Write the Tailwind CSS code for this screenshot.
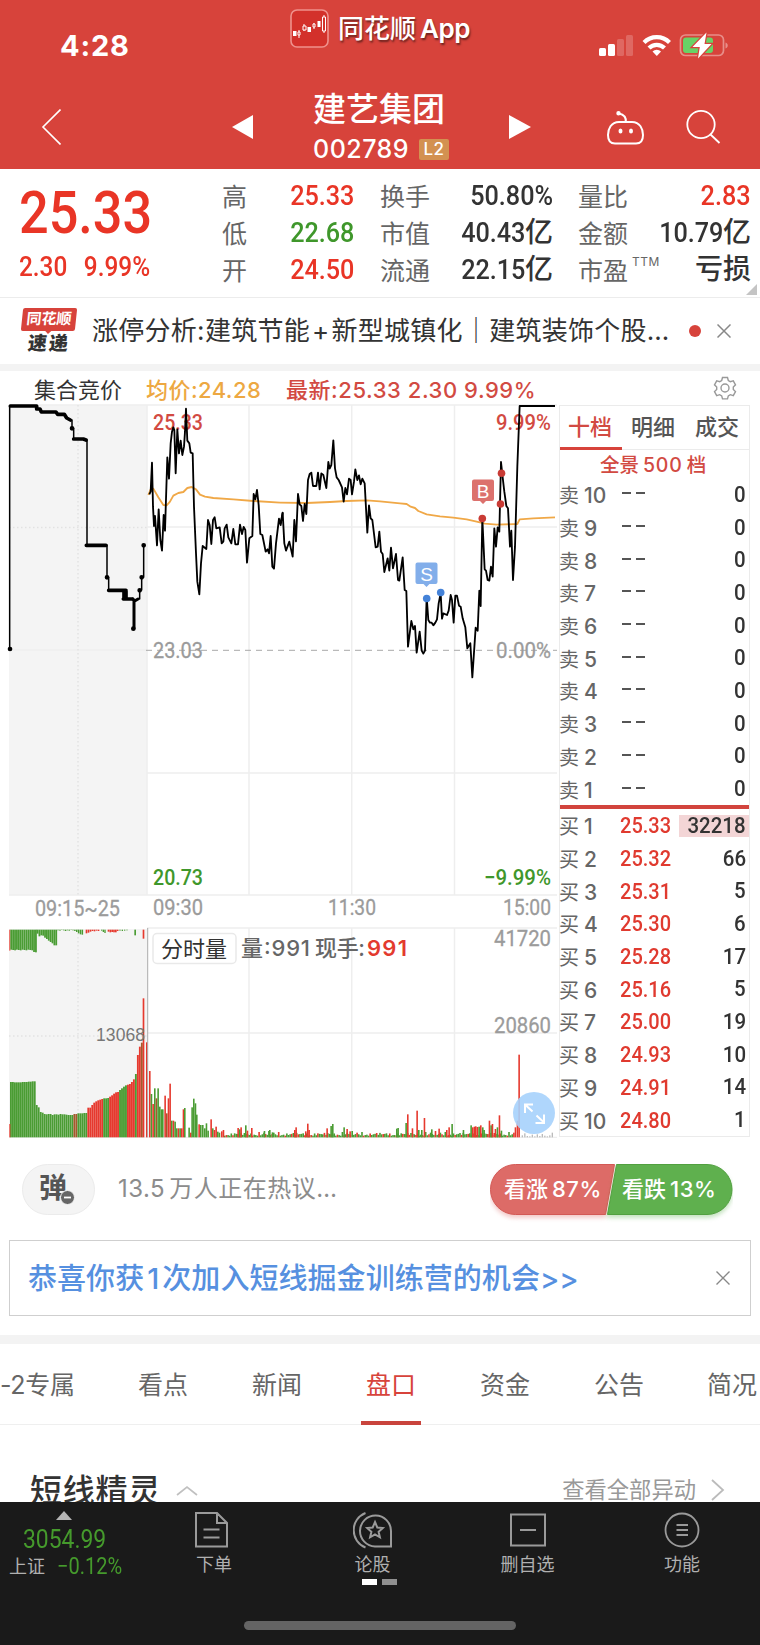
<!doctype html>
<html lang="zh-CN">
  <head>
    <meta charset="UTF-8" />
    <meta name="viewport" content="width=device-width, initial-scale=1.0" />
    <title>建艺集团 002789</title>
    <script src="https://cdn.jsdelivr.net/npm/@tailwindcss/browser@4"></script>
  </head>
  <body class="w-[760px] h-[1645px] overflow-hidden bg-white text-[#333] leading-none whitespace-nowrap font-['Inter','Noto_Sans_CJK_SC',sans-serif]">
    <!-- Header -->
    <header class="h-[169px] bg-[#d7433b] text-white">
      <div class="h-[76px] flex items-start">
        <div class="w-[290px] pl-[60px] pt-8 text-[29px] leading-[28px] font-bold tracking-[0.800px]">4:28</div>
        <svg class="w-[39px] h-[39px] mt-[9px]" viewBox="0 0 39 39" fill="none" stroke="#fff">
          <rect x="1" y="1" width="37" height="37" rx="6" stroke="#ef918c" stroke-width="1.6" fill="#d3312b" />
          <path d="M9 21v8M14 15v7M24 14v6M34 6v18" stroke-width="1" />
          <path d="M3 22h3.500v5H3zM17.500 18H21v5h-3.500zM27.500 12h3v6h-3z" fill="#fff" stroke="none" />
          <path d="M8 23h2v3h-2zM13 17h3v4h-3zM23 15h2v3h-2zM32.500 8h3v14h-3z" fill="#d3312b" />
        </svg>
        <div class="flex items-center w-[260px] pl-[9px] pt-[13px] text-[26px] leading-8 font-medium text-shadow-[1px_2px_2px_rgb(0_0_0_/_0.5)]">同花顺<span class="ml-1 font-semibold tracking-[-0.500px]">App</span></div>
        <svg class="w-[132px] h-7 mt-8 ml-[10px]" viewBox="0 0 132 28" fill="#fff">
          <rect x="0" y="16" width="7" height="8" rx="1.500" />
          <rect x="9" y="12" width="7" height="12" rx="1.500" />
          <rect x="18" y="7" width="7" height="17" rx="1.500" fill-opacity=".2" />
          <rect x="27" y="3" width="7" height="21" rx="1.500" fill-opacity=".2" />
          <g fill="none" stroke="#fff" stroke-width="4.200">
            <path d="M45 10.500a18 18 0 0 1 25.500 0" />
            <path d="M50 16a11 11 0 0 1 15.500 0" />
          </g>
          <path d="M53.500 19.500a6 6 0 0 1 8.500 0L57.800 24z" />
          <rect x="81.500" y="3" width="43" height="20.500" rx="5" fill="none" stroke="#fff" stroke-opacity=".4" stroke-width="1.700" />
          <path d="M126.500 10.500c3 1 3 5 0 6z" fill-opacity=".4" />
          <rect x="84" y="5.500" width="30" height="15.500" rx="3" fill="#68d266" />
          <path d="M107.500.5 93.500 15h7.300l-1.800 11.500L112.500 12h-7z" stroke="#d7433b" stroke-width="2.500" paint-order="stroke" />
        </svg>
      </div>
      <div class="h-[93px] flex items-start">
        <svg class="w-5 h-9 ml-[41px] mt-[33px]" viewBox="0 0 20 36" fill="none" stroke="#fff" stroke-width="1.600"><path d="M19.500 0.500 2 18l17.500 17.500" /></svg>
        <svg class="w-[21px] h-6 ml-[171px] mt-[39px]" viewBox="0 0 21 24" fill="#fff"><path d="M0 12 21 0v24z" /></svg>
        <div class="w-[196px] ml-[60px] pt-[15px]">
          <div class="text-[33px] leading-[36px] font-medium">建艺集团</div>
          <div class="flex items-center mt-[11px] h-[22px]">
            <span class="w-[106px] text-[25px] font-medium tracking-[0.500px]">002789</span>
            <span class="w-[30px] h-[21px] rounded-[2px] bg-[#d39151] text-[17px] leading-[21px] text-center font-medium tracking-[0.5px]">L2</span>
          </div>
        </div>
        <svg class="w-[22px] h-6 mt-[39px]" viewBox="0 0 22 24" fill="#fff"><path d="M22 12 0 0v24z" /></svg>
        <svg class="w-[39px] h-9 ml-[75px] mt-[34px]" viewBox="0 0 39 36" fill="none" stroke="#fff" stroke-width="2">
          <path d="M13 12h13c8 0 11 7 11 13s-2 8.500-7 8.500H9c-5 0-7-2.500-7-8.500s3-13 11-13zM19.800 12c.5-5-2-7.500-6.800-8.500" />
          <circle cx="12.500" cy="3.300" r="1.200" fill="#fff" />
          <ellipse cx="14.500" cy="21" rx="1" ry="1.600" fill="#fff" /><ellipse cx="25" cy="21" rx="1" ry="1.600" fill="#fff" />
        </svg>
        <svg class="w-[35px] h-[35px] ml-[41px] mt-[33px]" viewBox="0 0 35 35" fill="none" stroke="#fff" stroke-width="1.800"><circle cx="15" cy="15.500" r="13.700" /><path d="m24.500 25.500 9 8.500" /></svg>
      </div>
    </header>

    <!-- Quote -->
    <section class="h-[129px] border-b border-[#ececec] flex relative">
      <div class="w-[222px] pl-[19px] font-['Roboto'] font-medium text-[#e93526]">
        <div class="mt-[13px] h-[62px] leading-[62px] text-[59px] origin-left scale-x-[.885]">25.33</div>
        <div class="mt-[8px] h-[30px] leading-[30px] text-[28px] origin-left scale-x-[.87]">2.30<span class="ml-[19px]">9.99%</span></div>
      </div>
      <div id="quotes" class="flex pt-[10px]"></div>
      <svg class="absolute right-[3px] bottom-[2px] w-[11px] h-[11px]" viewBox="0 0 11 11"><path d="M11 0v11H0z" fill="#c4c4c4" /></svg>
    </section>

    <!-- News -->
    <section class="h-[66px] flex items-center">
      <div class="w-[71px] pl-[22px]">
        <div class="relative -skew-x-6 w-[54px] h-[23px] rounded-[2px] bg-[#d7433b] text-white text-[15px] leading-[22px] text-center font-bold">同花顺
          <span class="absolute left-[25px] -bottom-[2px] w-[5px] h-[5px] rotate-45 bg-[#d7433b]"></span>
        </div>
        <div class="-skew-x-6 w-[54px] mt-[3px] h-[20px] text-[19px] leading-[20px] text-center font-black tracking-[2px]">速递</div>
      </div>
      <div class="ml-[21px] w-[596px] text-[26px] leading-[36px] tracking-[0.280px]">涨停分析:建筑节能<span class="mx-[2px]">+</span>新型城镇化｜建筑装饰个股…</div>
      <span class="w-3 h-3 ml-px rounded-full bg-[#d7433b]"></span>
      <svg class="w-[14px] h-[14px] ml-4" viewBox="0 0 14 14" stroke="#888" stroke-width="1.500"><path d="m.5.5 13 13M13.500.5l-13 13" /></svg>
    </section>
    <div class="h-[7px] bg-[#f3f3f3]"></div>

    <!-- Chart -->
    <div class="h-[33px] flex items-center text-[22px] leading-[33px] pt-[5px]">
      <span class="ml-[34px] w-[112px]">集合竞价</span>
      <span class="w-[140px] text-[#eda842] font-medium tracking-[0.450px]">均价:24.28</span>
      <span class="w-[427px] text-[#d24a42] font-medium tracking-[0.550px]">最新:25.33 2.30 9.99%</span>
      <svg class="w-6 h-6 -mt-1" viewBox="0 0 24 24" fill="none" stroke="#999" stroke-width="1.400">
        <path d="M9.500 1.500h5l.8 3 2 1.200 3-.9 2.200 4-2.200 2.200v2.400l2.200 2.200-2.200 4-3-.9-2 1.200-.8 3h-5l-.8-3-2-1.200-3 .9-2.200-4 2.200-2.200V11L1.500 8.800l2.200-4 3 .9 2-1.200z" /><circle cx="12" cy="12" r="4" />
      </svg>
    </div>
    <div class="h-[734px] flex">
      <svg class="w-[557px] h-[734px]" viewBox="0 404 557 734">
        <g fill="#f4f4f4"><rect x="9" y="405" width="138" height="490" /><rect x="9" y="929" width="138" height="208" /></g>
        <g fill="none" stroke="#eeeeee" stroke-width="1.500">
          <path d="M9 405H557M9 895H557M147 405V895M249 405V895M351.700 405V895M454.500 405V895M147 527H557M9 650H147M147 773H557" />
          <path d="M147 928H557M249 928V1137M351.700 928V1137M454.500 928V1137M148 1033H557M9 1137.500H557" />
          <path d="M78 405V895M9 527.500H147M78 929V1137M9 1036H147" stroke-dasharray="1.500 2.500" stroke="#e2e2e2" />
        </g>
        <path d="M146 650.300H557" stroke="#a8a8a8" stroke-dasharray="6 5" />
        <g font-family="Roboto" font-size="22">
          <g fill="#9b9b9b" stroke="#9b9b9b" stroke-width=".3">
            <text x="153" y="657.500" textLength="50" lengthAdjust="spacingAndGlyphs">23.03</text>
            <text x="551" y="657.500" text-anchor="end" textLength="55" lengthAdjust="spacingAndGlyphs">0.00%</text>
            <text x="35" y="915.500" textLength="85" lengthAdjust="spacingAndGlyphs">09:15~25</text>
            <text x="153" y="914.500" textLength="50" lengthAdjust="spacingAndGlyphs">09:30</text>
            <text x="376" y="914.500" text-anchor="end" textLength="48" lengthAdjust="spacingAndGlyphs">11:30</text>
            <text x="551" y="914.500" text-anchor="end" textLength="48" lengthAdjust="spacingAndGlyphs">15:00</text>
            <text x="551" y="945.500" text-anchor="end" textLength="57" lengthAdjust="spacingAndGlyphs">41720</text>
            <text x="551" y="1032.500" text-anchor="end" textLength="57" lengthAdjust="spacingAndGlyphs">20860</text>
          </g>
          <g fill="#d24a42" font-weight="500">
            <text x="153" y="430" textLength="50" lengthAdjust="spacingAndGlyphs">25.33</text>
            <text x="551" y="430" text-anchor="end" textLength="55" lengthAdjust="spacingAndGlyphs">9.99%</text>
          </g>
          <g fill="#3f972b" font-weight="500">
            <text x="153" y="885" textLength="50" lengthAdjust="spacingAndGlyphs">20.73</text>
            <text x="551" y="885" text-anchor="end" textLength="67" lengthAdjust="spacingAndGlyphs">−9.99%</text>
          </g>
        </g>
        <!-- call auction -->
        <g transform="translate(0 400) scale(.33333)" fill="none" stroke="#000" stroke-linejoin="round" stroke-linecap="round">
          <path d="M29 18V747h3M216 60V85M221 85V117M261 120V436M321 436V532M326 532V571M419 570V597M425 532V570M431 436V532" stroke-width="4.500" />
          <path d="M31 18H110V27H120L124 36H168L173 43H193L200 54L211 60M221 117H250L258 120M259 436H318M326 571H378M370 597H398M372 574V597M378 574V597" stroke-width="11" />
          <path d="M402 600V685M398 597L404 603L414 597" stroke-width="9" />
          <path d="M216 85h.1M321 532h.1M400 686h.1M419 571h.1M425 532h.1M431 436h.1M30 747h.1" stroke-width="14" />
        </g>
        <!-- average price and intraday price -->
        <g transform="translate(0 400) scale(.33333)" fill="none" stroke-linejoin="round">
          <g stroke="#f0a847" stroke-width="5.500">
            <path d="M445 285 452 268 460 266 475 292 490 315 500 316 510 305 520 287 535 279 550 276 562 264 575 261 588 268 600 284 615 290 640 294 700 298 760 303 840 308" />
            <path transform="translate(840 0)" d="M0 308 80 309 150 306 200 303 260 301 300 304 360 310 380 312 392 320 405 324 415 333 440 343 480 349 520 353 560 358 590 365 615 371 650 374 712 372 719 358 760 355 825 352" />
          </g>
          <g stroke="#000" stroke-width="5.500">
            <path d="M448 283 452 275 456 188 459 320 462 378 465 348 471 436 476 328 481 420 486 452 491 345 495 392 502 172 507 236 512 130 516 95 520 82 523 90 527 220 532 88 537 160 542 122 547 165 552 140 555 95 558 26 562 122 568 130 572 158 578 160 582 320 588 460 592 545 598 583 603 490 608 438 619 447 624 360 629 375 634 432 639 360 644 352 649 385 659 382 665 430 670 425 674 385 680 374 685 412 694 430 700 387 706 433 714 433 720 374 726 402 731 381 736 390 741 488 748 415 757 408 761 282 766 298 771 270 776 315 781 402 787 405 797 455 803 448 807 460 812 408 817 500 822 506 828 430 837 356 842 375 848 338" />
            <path transform="translate(840 0)" d="M2 370 8 338 13 430 18 452 28 425 38 470 43 360 48 424 54 282 59 313 64 318 69 363 74 312 79 342 84 240 89 222 94 218 99 258 109 258 114 218 119 268 124 220 130 225 139 264 145 186 149 206 154 195 160 121 165 205 170 232 176 240 186 262 191 305 196 264 201 283 207 236 212 240 216 283 222 245 226 208 232 240 237 226 242 253 247 236 254 250 262 398 267 316 272 355 277 360 287 442 293 440 298 395 303 455 308 462 313 516 323 475 328 512 333 443 339 505 348 462 354 540 358 542 368 472 374 570 379 573 384 740 394 663 400 688 405 678 410 758 419 695 425 752 430 761 435 752 440 590 445 660 450 668 455 668 460 676 466 668 471 658 476 610 482 580 486 656 490 640 501 645 506 632 512 585 516 600 521 668 526 587 531 587 537 617 542 620 548 655 556 682 562 745 571 730 577 832 587 683 593 692 598 572 602 618 607 355 614 508 618 512 623 540 628 542 633 500 638 530 643 385 648 440 653 382 658 395 663 186 668 232 673 275 679 318 684 325 690 440 694 392 699 540 705 440 712 200 719 18 825 18" />
          </g>
        </g>
        <!-- buy and sell marks -->
        <g fill="#c93b35"><circle cx="482.300" cy="518.500" r="3.800" /><circle cx="500.500" cy="504" r="3.800" /><circle cx="501.500" cy="473.300" r="3.800" /></g>
        <g fill="#4482d8"><circle cx="426.700" cy="598.500" r="3.800" /><circle cx="440.700" cy="592.500" r="3.800" /></g>
        <path d="M474 479.500h18q2 0 2 2V499q0 2-2 2h-6l-3 3-3-3h-6q-2 0-2-2V481.500q0-2 2-2z" fill="#dc716d" />
        <path d="M417.500 562.500h18q2 0 2 2V582q0 2-2 2h-6l-3 3-3-3h-6q-2 0-2-2V564.500q0-2 2-2z" fill="#82aeea" />
        <g font-family="Liberation Sans" fill="#fff" font-size="19" text-anchor="middle"><text x="483" y="497.500">B</text><text x="426.500" y="580.500">S</text></g>
        <!-- volume -->
        <g id="volume" transform="translate(0 880) scale(.33333)"></g>
        <path d="M147.700 928V1137" stroke="#aaa" />
        <text x="96" y="1040.500" font-family="Liberation Sans" font-size="17.500" fill="#777" textLength="49">13068</text>
        <rect x="153" y="933.500" width="83" height="30" rx="4" fill="#fff" stroke="#e9e9e9" stroke-width="1.500" />
        <g font-family="Inter, 'Noto Sans CJK SC', sans-serif" font-size="22" fill="#666">
          <text x="161" y="957" fill="#333" textLength="66">分时量</text>
          <text x="241" y="956" font-weight="500" textLength="69">量:991</text>
          <text x="315" y="956" font-weight="500" textLength="50">现手:</text>
          <text x="367" y="956" font-weight="600" fill="#e33a2e" textLength="40">991</text>
        </g>
        <circle cx="534" cy="1113" r="21" fill="#a6d2fc" fill-opacity=".9" />
        <path d="m525.500 1105 7 6.500M525 1113v-8.500h8M536.500 1115.500l7 6.500M544 1114.500v8.500h-8.500" fill="none" stroke="#fff" stroke-width="2" />
      </svg>

      <!-- Order book -->
      <div class="ml-[2px] mt-px w-[191px] h-[732px] border border-[#ebebeb]">
        <div class="h-11 flex text-[22px] leading-[43px] border-b border-[#ebebeb] text-[#555] font-medium">
          <span class="w-[62px] h-[44px] pl-[8px] border-b-[3px] border-[#d7433b] text-[#d24a42]">十档</span>
          <span class="ml-[9px] w-[64px]">明细</span>
          <span>成交</span>
        </div>
        <div class="h-[29px] pt-[1px] text-[19.500px] leading-[28px] pl-[40px] text-[#d24a42] font-medium">全景<span class="mx-[4px] tracking-[0.800px]">500</span>档</div>
        <div id="asks" class="h-[326px]"></div>
        <div class="h-1 bg-[#d2443d]"></div>
        <div id="bids" class="pt-[1px]"></div>
      </div>
    </div>

    <!-- Discussion -->
    <section class="h-[102px] flex items-center">
      <div class="ml-[22px] w-[73px] h-[51px] rounded-full bg-[#f4f4f4] border border-[#ebebeb] relative text-[28px] leading-[46px] font-bold pl-[16px] text-[#555]">弹
        <svg class="absolute left-[37px] top-[25px] w-[15px] h-[15px]" viewBox="0 0 15 15"><circle cx="7.500" cy="7.500" r="7" fill="#666" stroke="#f4f4f4" /><path d="M4 7.500h7" stroke="#fff" stroke-width="1.800" /></svg>
      </div>
      <div class="ml-[23px] w-[372px] text-[24px] leading-[36px] tracking-[0.500px] text-[#8c8c8c]">13.5<span class="ml-1">万人正在热议…</span></div>
      <div class="relative w-[243px] h-[51px]">
        <svg class="absolute inset-0 w-[243px] h-[60px]" viewBox="0 0 243 60">
          <path class="drop-shadow-[0_3px_2px_rgb(221_106_102_/_0.35)]" d="M25.500.5H124.500L115.500 50.500H25.500A25 25 0 0 1 25.500.5z" fill="#dd6b67" stroke="#d35955" />
          <path class="drop-shadow-[0_3px_2px_rgb(93_175_76_/_0.35)]" d="M126.500.5H217a25 25 0 0 1 0 50H117.500z" fill="#5fb04e" stroke="#52a040" />
        </svg>
        <div class="relative flex text-white text-[22px] leading-[50px] font-medium">
          <span class="ml-[14px] w-[118px]">看涨<span class="ml-1 tracking-[0.500px]">87%</span></span>
          <span>看跌<span class="ml-1 tracking-[0.500px]">13%</span></span>
        </div>
      </div>
    </section>

    <!-- Banner -->
    <section class="mx-[9px] h-[76px] border border-[#cfcfcf] flex items-center">
      <div class="ml-[18px] w-[688px] pt-[2px] text-[29px] leading-[40px] font-medium text-[#5690e0] tracking-[0.050px]">恭喜你获<span class="mx-[3px]">1</span>次加入短线掘金训练营的机会&gt;&gt;</div>
      <svg class="w-[14px] h-[14px]" viewBox="0 0 14 14" stroke="#888" stroke-width="1.400"><path d="m.5.5 13 13M13.500.5l-13 13" /></svg>
    </section>
    <div class="mt-[19px] h-[9px] bg-[#f3f3f3]"></div>

    <!-- Tabs -->
    <nav class="h-[81px] border-b border-[#efefef] flex text-[25px] leading-[82px] text-[#666]">
      <span class="w-[138px] tracking-[-0.300px]">-2专属</span>
      <span class="w-[114px]">看点</span>
      <span class="w-[109px]">新闻</span>
      <span class="w-[60px] h-[81px] pl-[5px] border-b-4 border-[#c9443d] text-[#d7433b]">盘口</span>
      <span class="ml-[59px] w-[114px]">资金</span>
      <span class="w-[113px]">公告</span>
      <span>简况</span>
    </nav>
    <section class="h-[77px] overflow-hidden flex">
      <h2 class="ml-[30px] pt-[44px] text-[32px] leading-[44px] font-medium tracking-[0.800px]">短线精灵</h2>
      <svg class="ml-[15px] mt-[60px] w-[22px] h-[11px]" viewBox="0 0 22 11" fill="none" stroke="#c0c0c0" stroke-width="1.700"><path d="M1 10 11 2l10 8" /></svg>
      <span class="ml-auto pt-[47px] text-[22.300px] leading-[36px] text-[#999]">查看全部异动</span>
      <svg class="ml-[14px] mt-[54px] mr-[35px] w-[15px] h-[22px]" viewBox="0 0 15 22" fill="none" stroke="#bbb" stroke-width="1.800"><path d="m2 1 11 10L2 21" /></svg>
    </section>

    <!-- Bottom bar -->
    <footer class="relative h-[143px] bg-[#1a1a1a] flex text-[18px] text-[#b0b0b0]">
      <div class="w-[148px]">
        <svg class="ml-14 mt-[9px] w-4 h-[9px]" viewBox="0 0 16 9" fill="#b5b5b5"><path d="M8 0 16 9H0z" /></svg>
        <div class="mt-[5px] ml-[23px] text-[26px] leading-[28px] origin-left scale-x-[.88] font-['Roboto'] text-[#459a2c]">3054.99</div>
        <div class="mt-[1px] flex items-center ml-[9px] leading-[26px]">上证<span class="ml-3 text-[23px] origin-left scale-x-[.87] font-['Roboto'] text-[#459a2c]">−0.12%</span></div>
      </div>
      <div class="w-[128px] flex flex-col items-center">
        <svg class="mt-[9px] w-[36px] h-[38px]" viewBox="0 0 36 38" fill="none" stroke="#9a9a9a" stroke-width="2"><path d="M2 2h21l10 10v23.500H2zM23 2v10h10M9.500 18.500h16M9.500 26.500h16" /></svg>
        <span class="mt-[3px] ml-1 leading-[26px]">下单</span>
      </div>
      <div class="w-[193px] flex flex-col items-center">
        <svg class="mt-[9px] w-[40px] h-[38px]" viewBox="0 0 40 38" fill="none" stroke="#9a9a9a" stroke-width="2">
          <path d="M38 20v15.500H22A15.500 15.500 0 1 1 38 20zM12.500 2a18.500 18.500 0 0 0 0 34.500M22 11l2.300 5.500 5.500.6-4.200 3.700 1.300 5.500-4.900-2.900-4.900 2.900 1.300-5.500-4.200-3.700 5.500-.6z" />
        </svg>
        <span class="mt-[3px] leading-[26px]">论股</span>
        <div class="mt-[1px] flex gap-[5px] ml-[14px]"><i class="w-[15px] h-[6px] bg-white"></i><i class="w-[15px] h-[6px] bg-[#909090]"></i></div>
      </div>
      <div class="w-[117px] flex flex-col items-center">
        <svg class="mt-[9px] w-[38px] h-[38px]" viewBox="0 0 38 38" fill="none" stroke="#9a9a9a" stroke-width="2"><path d="M2 3.500h34v31H2zM11 19h16" /></svg>
        <span class="mt-[3px] leading-[26px]">删自选</span>
      </div>
      <div class="w-[156px] ml-[18px] flex flex-col items-center">
        <svg class="mt-[9px] w-[36px] h-[38px]" viewBox="0 0 36 38" fill="none" stroke="#9a9a9a" stroke-width="1.800"><circle cx="18" cy="19" r="16.500" /><path d="M12.500 14h11.500M12.500 19h11.500M12.500 24h11.500" /></svg>
        <span class="mt-[3px] leading-[26px]">功能</span>
      </div>
      <div class="absolute left-[244px] bottom-[15px] w-[272px] h-[9px] rounded-full bg-[#646464]"></div>
    </footer>

    <script>
      const red = "text-[#e93526]";
      const green = "text-[#3f972b]";
      const dark = "text-[#333]";
      const quotes = [
        { width: "w-[132px] mr-[26px]", rows: [["高", "25.33", red], ["低", "22.68", green], ["开", "24.50", red]] },
        { width: "w-[173px] mr-[25px]", rows: [["换手", "50.80%", dark], ["市值", "40.43亿", dark], ["流通", "22.15亿", dark]] },
        { width: "w-[173px]", rows: [["量比", "2.83", red], ["金额", "10.79亿", dark], ["市盈", "亏损", dark]] },
      ];
      // the digits are narrowed, a trailing Chinese unit keeps its own width
      const narrow = (value, color) => {
        const [, digits, unit] = value.match(/^([\d.%]*)(.*)$/);
        return `<span class="-mt-[2px] flex font-['Roboto','Noto_Sans_CJK_SC'] font-medium text-[28px] ${color}">
              <span class="origin-right scale-x-[.9]">${digits}</span><span>${unit}</span>
            </span>`;
      };
      document.getElementById("quotes").innerHTML = quotes
        .map(
          (col) => `<div class="${col.width}">${col.rows
            .map(
              ([label, value, color]) => `
          <div class="h-[37px] flex justify-between leading-[37px]">
            <span class="text-[25px] text-[#666]">${label}${label === "市盈" ? '<sup class="ml-1 text-[12px] tracking-[0.5px] -top-[14px]">TTM</sup>' : ""}</span>
            ${narrow(value, color)}
          </div>`
            )
            .join("")}</div>`
        )
        .join("");

      function bookRow(side, level, price, volume) {
        const dash = '<i class="w-[9px] h-[2px] bg-[#555]"></i>';
        const highlight = volume === 32218 ? "bg-[#f3d5d6]" : "";
        return `
          <div class="h-[32.7px] flex items-center">
            <span class="w-[61px] text-[20px] leading-[32px] text-[#666] pt-[2px] -ml-px">${side}<span class="ml-[5px] text-[21px] font-medium">${level}</span></span>
            ${
              price === "--"
                ? `<span class="flex-1 flex gap-[5px] ml-[2px] pb-[4px]">${dash}${dash}</span>`
                : `<span class="flex-1 font-['Roboto'] font-medium text-[22px] origin-left scale-x-[.91] text-[#e03a2f]">${price}</span>`
            }
            <span class="h-[22px] leading-[22px] pl-[4px] pr-[3px] -mt-[1px] ${highlight}">
              <span class="block font-['Roboto'] font-medium text-[22px] origin-right scale-x-[.93]">${volume}</span>
            </span>
          </div>`;
      }
      document.getElementById("asks").innerHTML = [10, 9, 8, 7, 6, 5, 4, 3, 2, 1].map((n) => bookRow("卖", n, "--", 0)).join("");
      const bids = [["25.33", 32218], ["25.32", 66], ["25.31", 5], ["25.30", 6], ["25.28", 17], ["25.16", 5], ["25.00", 19], ["24.93", 10], ["24.91", 14], ["24.80", 1]];
      document.getElementById("bids").innerHTML = bids.map(([price, volume], i) => bookRow("买", i + 1, price, volume)).join("");

      // Volume bars, baseline at 772
      const colors = { r: "#e6392e", g: "#4a9c33", m: "#a35a2c" };
      const bars = [];
      const bar = (x, h, c, w = 4.8, y = 772 - h) => bars.push(`<rect x="${x}" y="${y}" width="${w}" height="${h}" fill="${colors[c]}"/>`);

      const auction = [
        ["g", [166, 166, 165, 165, 165, 165, 166, 166, 166, 167, 167, 168, 168, 97, 90, 76, 74, 70, 69, 70, 70, 67, 69, 69, 68, 70, 69, 69, 68, 67, 67, 67]],
        ["m", [70, 70]],
        ["g", [72, 72, 72, 73, 73]],
        ["r", [89, 89, 97, 104, 108, 111, 113, 115]],
        ["g", [117, 117, 118]],
        ["r", [122, 126, 131, 135, 136]],
        ["g", [142, 147, 152, 156]],
        ["r", [158, 160, 166, 174]],
        ["g", [190]],
        ["r", [247, 272]],
        ["m", [284]],
      ];
      let x = 30;
      auction.forEach(([color, heights]) => heights.forEach((h) => { bar(x, h, color, 5.6); x += 5.95; }));
      bar(428, 417, "r", 5);
      bar(28, 40, "r", 3);
      bar(28, 63, "r", 3, 149);
      for (let i = 0; i < 14; i++) bar(31 + i * 5.7, 60 + (i % 3) + (i > 11 ? 7 : 0), "g", 5.4, 149);
      [12, 20, 17, 18, 24, 28, 33, 37, 41, 47, 47].forEach((h, i) => bar(110 + i * 5.6, h, "g", 5.4, 149));
      [2, 3, 1, 2, 4, 2, 3, 1, 2, 4, 7, 11, 14, 15].forEach((h, i) => bar(172 + i * 5.6, h, "g", 4.5, 149));
      [11, 9, 6, 4, 5, 3, 4].forEach((h, i) => bar(257 + i * 6, h, "r", 5, 149));
      [3, 7, 10].forEach((h, i) => bar(303 + i * 5, h, "g", 4, 149));
      [6, 8, 7, 8, 8, 4].forEach((h, i) => bar(323 + i * 5.5, h, "r", 5, 149));
      [3, 4, 3, 2].forEach((h, i) => bar(358 + i * 7, h, "g", 4, 149));
      bar(403, 17, "g", 5, 149);
      bar(428, 27, "r", 5, 149);

      const session = "438,285,r 447,199,r 452,130,g 457,100,r 462,147,g 467,117,m 472,147,g 477,92,g 482,84,g 486,84,g 493,125,r 498,72,m 503,117,r 508,161,r 513,50,g 518,50,r 523,47,g 528,27,g 533,27,r 538,27,g 543,27,r 548,84,r 552,88,g 565,29,g 570,14,r 574,90,g 579,116,g 584,102,g 588,68,g 595,39,r 600,37,g 606,37,g 612,27,g 617,42,g 622,20,g 631,54,r 636,27,g 641,22,r 646,32,r 651,17,g 656,14,g 663,18,r 668,22,r 712,28,r 717,24,g 721,30,r 735,36,g 740,20,r 753,28,r 791,19,g 807,22,g 815,15,g 882,22,r 886,30,r 915,18,r 921,41,r 925,22,r 979,27,r 991,34,g 996,40,g 1030,30,g 1039,25,r 1048,18,r 1188,26,g 1192,28,g 1216,43,g 1221,69,r 1235,27,r 1249,80,r 1254,22,g 1263,22,g 1271,58,r 1293,24,g 1315,26,r 1338,22,r 1345,30,r 1354,40,g 1388,22,g 1411,36,g 1416,30,r 1421,32,r 1425,33,r 1430,31,r 1435,32,g 1440,36,r 1446,30,g 1450,22,g 1466,50,r 1471,36,g 1475,40,r 1484,25,r 1490,30,g 1496,66,r 1502,20,g 1544,30,r 1550,50,r 1555,248,r";
      // quiet minutes between the larger trades
      for (let i = 0; i < 178; i++) bar(672 + i * 4.9, 5 + ((i * i * 7 + i * 13) % 17) * (i % 3 ? 0.6 : 1), (i * 5 + (i >> 2)) % 7 > 3 ? "r" : "g");
      session.split(" ").forEach((item) => {
        const [px, h, c] = item.split(",");
        bar(+px, +h, c);
      });
      [6, 12, 4, 3, 8, 3, 9, 4, 10, 5, 3, 6, 14].forEach((h, i) => bars.push(`<rect x="${1565 + i * 7.5}" y="${772 - h}" width="4" height="${h}" fill="#bbb"/>`));
      document.getElementById("volume").innerHTML = bars.join("");
    </script>
  </body>
</html>
